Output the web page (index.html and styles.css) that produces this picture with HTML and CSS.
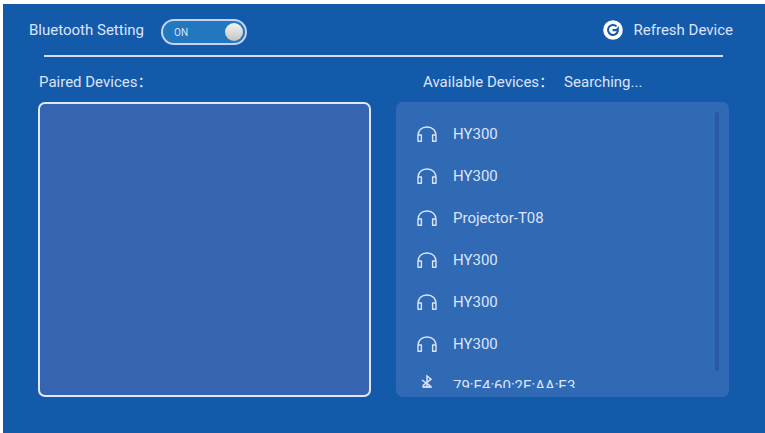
FILE: index.html
```html
<!DOCTYPE html>
<html lang="en">
<head>
    <meta charset="UTF-8">
    <meta name="viewport" content="width=device-width, initial-scale=1.0">
    <title>Bluetooth Setting</title>
    <link rel="stylesheet" href="styles.css">
</head>
<body>
    <!-- Shared icons -->
    <svg class="icon-defs" width="0" height="0" aria-hidden="true">
        <symbol id="headphones" viewBox="0 0 20 16">
            <path d="M1 10.5C.6 4.5 4.5 1 10 1s9.4 3.5 9 9.5M1 9v6.2h3.4V9H1M19 9v6.2h-3.4V9H19" fill="none" stroke="currentColor" stroke-width="1.4" stroke-linejoin="round"/>
        </symbol>
        <symbol id="bluetooth" viewBox="0 0 20 16" overflow="visible">
            <path d="M5 2l8.6 6.2M10 9V-2l4 3.2-8.4 6.6" fill="none" stroke="currentColor" stroke-width="1.5"/>
            <path d="M5.4 9h9.4" fill="none" stroke="currentColor" stroke-width="1.8"/>
        </symbol>
    </svg>

    <main class="screen">
        <header class="topbar">
            <label for="power">Bluetooth Setting</label>
            <span class="switch">
                <input type="checkbox" id="power" checked>
                <span class="switch-text">ON</span>
            </span>
            <button type="button" class="refresh">
                <svg width="20" height="20" viewBox="0 0 20 20" aria-hidden="true">
                    <circle cx="10" cy="10" r="9.8" fill="#fff"/>
                    <path d="M13.6 6.4A5 5 0 1 0 14.9 11" fill="none" stroke="#145aab" stroke-width="2"/>
                    <path d="M9.6 9h6v2.2h-6zM15.8 6v5.2h-4.6z" fill="#145aab"/>
                </svg>
                Refresh Device
            </button>
        </header>

        <div class="columns">
            <section class="column">
                <h2 class="paired-title">Paired Devices：</h2>
                <div class="panel paired"></div>
            </section>

            <section class="column">
                <h2 class="available-title">Available Devices：<span class="status">Searching...</span></h2>
                <div class="panel available">
                    <ul class="devices">
                        <li><svg class="icon"><use href="#headphones"/></svg>HY300</li>
                        <li><svg class="icon"><use href="#headphones"/></svg>HY300</li>
                        <li><svg class="icon"><use href="#headphones"/></svg>Projector-T08</li>
                        <li><svg class="icon"><use href="#headphones"/></svg>HY300</li>
                        <li><svg class="icon"><use href="#headphones"/></svg>HY300</li>
                        <li><svg class="icon"><use href="#headphones"/></svg>HY300</li>
                        <li><svg class="icon"><use href="#bluetooth"/></svg>79:E4:60:2E:AA:E3</li>
                    </ul>
                    <div class="scrollbar"></div>
                </div>
            </section>
        </div>
    </main>
</body>
</html>
```

FILE: styles.css
```css
* {
    box-sizing: border-box;
}

body {
    margin: 0;
    padding: 4px 0 0 3px;
    height: 100vh;
    background: #fff;
    color: #dbe4fa;
    font-family: Roboto, "Noto Sans CJK SC", sans-serif;
    font-size: 15px;
    line-height: 20px;
}

.icon-defs {
    position: absolute;
}

.screen {
    display: flex;
    flex-direction: column;
    height: 100%;
    padding: 0 36px 36px 35px;
    background: #145aab;
}

/* Top bar */
.topbar {
    display: flex;
    align-items: center;
    height: 53px;
    margin: 0 6px;
    border-bottom: 2px solid #d3def5;
}

.topbar label {
    margin-left: -15px;
}

.switch {
    position: relative;
    margin: 4px 0 0 17px;
    height: 26px;
}

.switch input {
    appearance: none;
    display: flex;
    justify-content: flex-end;
    align-items: center;
    width: 86px;
    height: 26px;
    margin: 0;
    padding: 0 2px;
    border: 2px solid #c5d2f0;
    border-radius: 13px;
    background: #2377bf;
    cursor: pointer;
}

.switch input::before {
    content: "";
    width: 18px;
    height: 18px;
    border-radius: 50%;
    background: linear-gradient(#f4f4f4, #c4c4c4);
}

.switch input:not(:checked) {
    justify-content: flex-start;
}

.switch-text {
    position: absolute;
    top: 4px;
    left: 13px;
    font-size: 10px;
    pointer-events: none;
}

.refresh {
    display: flex;
    align-items: center;
    gap: 11px;
    margin: 0 -10px 0 auto;
    padding: 0;
    border: none;
    background: none;
    color: inherit;
    font: inherit;
    cursor: pointer;
}

/* Device columns */
.columns {
    flex: 1;
    display: grid;
    grid-template-columns: 1fr 1fr;
    gap: 25px;
    min-height: 0;
}

.column {
    display: flex;
    flex-direction: column;
    min-height: 0;
}

h2 {
    margin: 15px 0 10px;
    height: 20px;
    font-size: 15px;
    font-weight: normal;
    white-space: nowrap;
}

.paired-title {
    padding-left: 1px;
}

.available-title {
    padding-left: 27px;
}

.status {
    margin-left: 10px;
}

.panel {
    flex: 1;
    min-height: 0;
    border-radius: 7px;
}

.paired {
    border: 2px solid #dfe7fa;
    background: #3664b0;
}

.available {
    display: flex;
    padding: 10px 10px 9px 21px;
    background: #316ab4;
}

.devices {
    flex: 1;
    margin: 0;
    padding: 1px 0 0;
    overflow: hidden;
    list-style: none;
}

.devices li {
    display: flex;
    align-items: center;
    gap: 16px;
    height: 42px;
}

.icon {
    width: 20px;
    height: 16px;
    overflow: visible;
}

.scrollbar {
    width: 4px;
    margin-bottom: 17px;
    border-radius: 2px;
    background: #2958a6;
}
```
